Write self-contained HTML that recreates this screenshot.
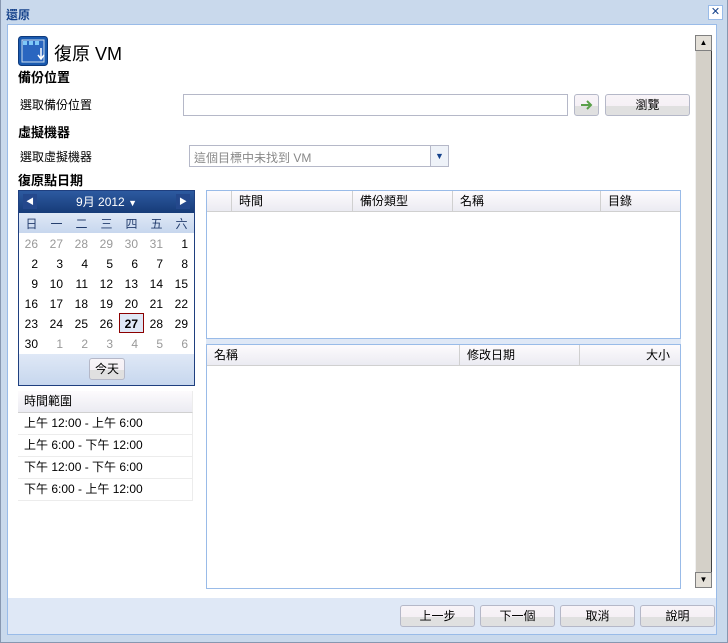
<!DOCTYPE html>
<html><head><meta charset="utf-8"><style>
*{box-sizing:border-box;margin:0;padding:0}
body{width:728px;height:643px;position:relative;overflow:hidden;background:#c9d9ec;font:12px "Liberation Sans","Noto Sans CJK TC",sans-serif;color:#000}
.a{position:absolute}
.btn{position:absolute;height:22px;border:1px solid #b5b8c8;border-radius:3px;background:linear-gradient(#f8f4f8 0,#f5f0f5 55%,#e0e0e0 55%,#e0e0e0 100%);text-align:center;line-height:20px;font-size:12px}
.hd{position:absolute;top:0;height:21px;line-height:20px;background:linear-gradient(#fdfbfd,#ebebf2);border-right:1px solid #d0d0d0;border-bottom:1px solid #d0d0d0;padding-left:7px}
.cal td{width:25px;height:20px;text-align:right;padding-right:6px;font-size:12px;padding-top:2px}
.cal .g{color:#999}
.tr{position:absolute;left:0;width:175px;height:22px;line-height:21px;padding-left:6px;border-bottom:1px solid #ececec;border-right:1px solid #ececec}
</style></head><body>
<div class="a" style="left:0;top:0;width:728px;height:643px;border:1px solid #8797b0;border-top:none"></div>
<div class="a" style="left:6px;top:6px;font-weight:bold;color:#15428b">還原</div>
<div class="a" style="left:708px;top:5px;width:15px;height:15px;border:1px solid #99bbe8;background:#fff;color:#15428b;font-size:11px;line-height:13px;text-align:center">✕</div>
<div class="a" style="left:7px;top:24px;width:710px;height:611px;border:1px solid #99bbe8;background:#fff"></div>
<div class="a" style="left:8px;top:598px;width:708px;height:36px;background:#dfe8f6"></div>

<svg class="a" style="left:18px;top:36px" width="30" height="30" viewBox="0 0 30 30"><rect x="0.5" y="0.5" width="29" height="29" rx="3" fill="#1a5ab0" stroke="#0e3a7c"/><rect x="4" y="4" width="22" height="22" fill="#2a66c0" stroke="#cde" /><rect x="5" y="5" width="4" height="4" fill="#7ec8f8"/><rect x="11" y="5" width="4" height="4" fill="#7ec8f8"/><rect x="17" y="5" width="4" height="4" fill="#7ec8f8"/><path d="M23 12v10M20 19l3 4 3-4" stroke="#fff" stroke-width="1.5" fill="none"/></svg>
<div class="a" style="left:54px;top:40px;font-size:18px">復原 VM</div>
<div class="a" style="left:18px;top:67px;font-weight:bold;font-size:13px">備份位置</div>
<div class="a" style="left:20px;top:96px">選取備份位置</div>
<div class="a" style="left:183px;top:94px;width:385px;height:22px;border:1px solid #b5b8c8"></div>
<div class="btn" style="left:574px;top:94px;width:25px"><svg width="14" height="12" viewBox="0 0 14 12" style="margin-top:4px"><path d="M1 6h10M7 2l4 4-4 4" stroke="#5aa04a" stroke-width="2" fill="none"/></svg></div>
<div class="btn" style="left:605px;top:94px;width:85px">瀏覽</div>
<div class="a" style="left:18px;top:122px;font-weight:bold;font-size:13px">虛擬機器</div>
<div class="a" style="left:20px;top:148px">選取虛擬機器</div>
<div class="a" style="left:189px;top:145px;width:260px;height:22px;border:1px solid #b5b8c8;color:#888;padding:3px 4px">這個目標中未找到 VM</div>
<div class="a" style="left:430px;top:146px;width:18px;height:20px;border-left:1px solid #b5b8c8;background:#eef2f8;color:#15428b;font-size:9px;text-align:center;line-height:20px">▼</div>
<div class="a" style="left:18px;top:170px;font-weight:bold;font-size:13px">復原點日期</div>

<div class="a" style="left:18px;top:190px;width:177px;height:196px;border:1px solid #1f3f7f;background:#fff">
 <div style="height:22px;background:linear-gradient(#2d5aa0,#163b78);color:#fff;text-align:center;line-height:22px;position:relative">9月 2012 <span style="font-size:9px">▼</span>
 <span style="position:absolute;left:4px;top:3px;width:14px;height:15px;background:#24488c;font-size:8px;line-height:15px">◀</span>
 <span style="position:absolute;right:4px;top:3px;width:14px;height:15px;background:#24488c;font-size:8px;line-height:15px">▶</span></div>
 <table class="cal" style="border-collapse:collapse;width:175px">
 <tr style="background:linear-gradient(#dfe8f6,#c7d7ee);color:#233d6d"><td style="text-align:center;padding:0">日</td><td style="text-align:center;padding:0">一</td><td style="text-align:center;padding:0">二</td><td style="text-align:center;padding:0">三</td><td style="text-align:center;padding:0">四</td><td style="text-align:center;padding:0">五</td><td style="text-align:center;padding:0">六</td></tr>
 <tr><td class="g">26</td><td class="g">27</td><td class="g">28</td><td class="g">29</td><td class="g">30</td><td class="g">31</td><td>1</td></tr>
 <tr><td>2</td><td>3</td><td>4</td><td>5</td><td>6</td><td>7</td><td>8</td></tr>
 <tr><td>9</td><td>10</td><td>11</td><td>12</td><td>13</td><td>14</td><td>15</td></tr>
 <tr><td>16</td><td>17</td><td>18</td><td>19</td><td>20</td><td>21</td><td>22</td></tr>
 <tr><td>23</td><td>24</td><td>25</td><td>26</td><td style="font-weight:bold;outline:1px solid #8b0000;outline-offset:-1px;background:#dfe8f6">27</td><td>28</td><td>29</td></tr>
 <tr><td>30</td><td class="g">1</td><td class="g">2</td><td class="g">3</td><td class="g">4</td><td class="g">5</td><td class="g">6</td></tr>
 </table>
 <div style="position:absolute;left:0;top:163px;width:175px;height:31px;background:linear-gradient(#dfe8f6,#c7d7ee)"></div>
 <div class="btn" style="left:70px;top:167px;width:36px">今天</div>
</div>

<div class="a" style="left:18px;top:391px;width:176px;height:110px">
 <div class="tr" style="top:0;background:linear-gradient(#fdfbfd,#ebebf2);border-bottom:1px solid #d0d0d0">時間範圍</div>
 <div class="tr" style="top:22px">上午 12:00 - 上午 6:00</div>
 <div class="tr" style="top:44px">上午 6:00 - 下午 12:00</div>
 <div class="tr" style="top:66px">下午 12:00 - 下午 6:00</div>
 <div class="tr" style="top:88px">下午 6:00 - 上午 12:00</div>
</div>

<div class="a" style="left:206px;top:190px;width:475px;height:149px;border:1px solid #99bbe8">
 <div class="hd" style="left:0;width:25px"></div>
 <div class="hd" style="left:25px;width:121px">時間</div>
 <div class="hd" style="left:146px;width:100px">備份類型</div>
 <div class="hd" style="left:246px;width:148px">名稱</div>
 <div class="hd" style="left:394px;width:79px;border-right:none">目錄</div>
</div>
<div class="a" style="left:206px;top:339px;width:475px;height:5px;background:#dfe8f6"></div>
<div class="a" style="left:206px;top:344px;width:475px;height:245px;border:1px solid #99bbe8">
 <div class="hd" style="left:0;width:253px">名稱</div>
 <div class="hd" style="left:253px;width:120px">修改日期</div>
 <div class="hd" style="left:373px;width:100px;border-right:none;text-align:right;padding-right:10px">大小</div>
</div>

<div class="a" style="left:695px;top:35px;width:17px;height:553px;background:#d4d0c8;border-left:1px solid #f0f0f0;border-right:1px solid #404040"></div>
<div class="a" style="left:695px;top:35px;width:17px;height:16px;background:#e4e0d8;border:1px solid #808080;font-size:8px;text-align:center;line-height:14px">▲</div>
<div class="a" style="left:695px;top:572px;width:17px;height:16px;background:#e4e0d8;border:1px solid #808080;font-size:8px;text-align:center;line-height:14px">▼</div>

<div class="btn" style="left:400px;top:605px;width:75px">上一步</div>
<div class="btn" style="left:480px;top:605px;width:75px">下一個</div>
<div class="btn" style="left:560px;top:605px;width:75px">取消</div>
<div class="btn" style="left:640px;top:605px;width:75px">說明</div>
</body></html>
